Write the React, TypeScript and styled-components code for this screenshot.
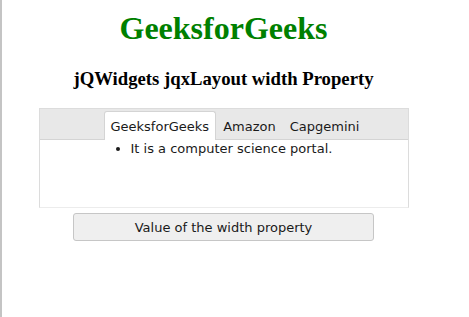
import React from "react";
import styled, { createGlobalStyle } from "styled-components";

const GlobalStyle = createGlobalStyle`
  html, body {
    margin: 0;
    background: #ffffff;
  }
`;

const Page = styled.div`
  box-sizing: border-box;
  min-height: 100vh;
  display: flex;
  flex-direction: column;
  align-items: center;
  border-left: 2px solid #c4c4c4;
  padding: 0 30px 0 6px;
`;

const Title = styled.h1`
  font-family: "Liberation Serif", "Times New Roman", serif;
  font-size: 32px;
  line-height: 37px;
  font-weight: bold;
  color: #008000;
  margin: 10px 0 21px;
`;

const Subtitle = styled.h3`
  font-family: "Liberation Serif", "Times New Roman", serif;
  font-size: 18.72px;
  line-height: 21.5px;
  font-weight: bold;
  color: #000;
  margin: 0 0 18.5px;
`;

const Layout = styled.div`
  box-sizing: border-box;
  width: 370px;
  height: 100px;
  border: 1px solid #dcdcdc;
  border-bottom-color: #ececec;
  display: flex;
  flex-direction: column;
  font-family: "DejaVu Sans", Verdana, sans-serif;
  font-size: 13px;
  color: #1a1a1a;
`;

const TabBar = styled.div`
  height: 30px;
  display: flex;
  align-items: flex-end;
  padding-left: 64px;
  background: #e8e8e8;
  border-bottom: 1px solid #d4d4d4;
`;

const Tab = styled.div<{ $active?: boolean }>`
  box-sizing: border-box;
  height: 29px;
  display: flex;
  align-items: center;
  padding: 0 6px;
  margin-bottom: -1px;
  background: ${(p) => (p.$active ? "#ffffff" : "transparent")};
  border: 1px solid ${(p) => (p.$active ? "#d4d4d4" : "transparent")};
  border-bottom: none;
  border-radius: 3px 3px 0 0;
`;

const Panel = styled.div`
  flex: 1;
  background: #fff;
  padding: 1px 0 0 51px;
`;

const List = styled.ul`
  margin: 0;
  padding-left: 40px;
  line-height: 15px;
`;

const ActionButton = styled.button`
  box-sizing: border-box;
  width: 301px;
  height: 28px;
  margin-top: 5px;
  background: #efefef;
  border: 1px solid #c6c6c6;
  border-radius: 3px;
  font-family: "DejaVu Sans", Verdana, sans-serif;
  font-size: 13px;
  color: #1a1a1a;
`;

const tabs = ["GeeksforGeeks", "Amazon", "Capgemini"];

export default function App() {
  return (
    <>
      <GlobalStyle />
      <Page>
        <Title>GeeksforGeeks</Title>
        <Subtitle>jQWidgets jqxLayout width Property</Subtitle>
        <Layout>
          <TabBar>
            {tabs.map((t, i) => (
              <Tab key={t} $active={i === 0}>
                {t}
              </Tab>
            ))}
          </TabBar>
          <Panel>
            <List>
              <li>It is a computer science portal.</li>
            </List>
          </Panel>
        </Layout>
        <ActionButton>Value of the width property</ActionButton>
      </Page>
    </>
  );
}
